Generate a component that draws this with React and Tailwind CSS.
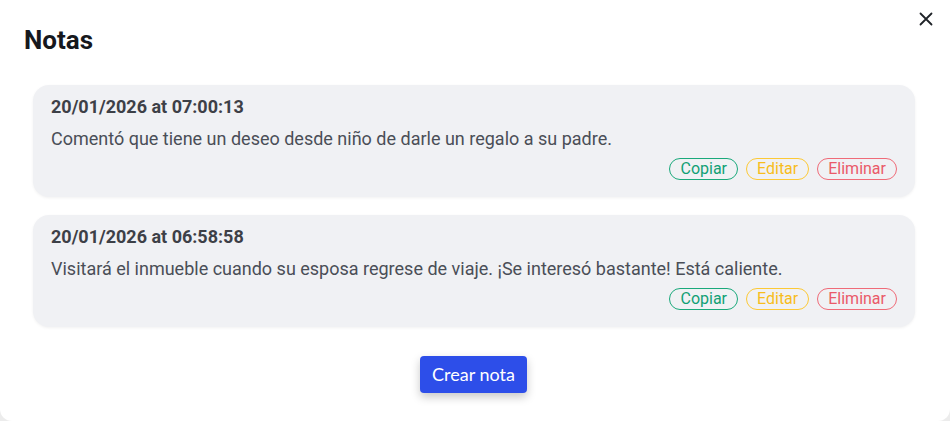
import React from "react";

const notes = [
  {
    date: "20/01/2026 at 07:00:13",
    text: "Comentó que tiene un deseo desde niño de darle un regalo a su padre.",
  },
  {
    date: "20/01/2026 at 06:58:58",
    text: "Visitará el inmueble cuando su esposa regrese de viaje. ¡Se interesó bastante! Está caliente.",
  },
];

function Pill({ label, cls }) {
  return (
    <button
      className={`h-[22px] px-[10px] rounded-full border text-[16px] leading-none flex items-center bg-transparent ${cls}`}
    >
      {label}
    </button>
  );
}

export default function App() {
  return (
    <div className="w-[950px] h-[421px] bg-[#ececec] overflow-hidden" style={{ fontFamily: "Roboto, 'Liberation Sans', sans-serif" }}>
      <div className="relative w-full h-[421px] bg-white rounded-b-[12px] flex flex-col">
        <button className="absolute top-[12px] right-[17px] w-[14px] h-[14px] text-[#1f2328]">
          <svg viewBox="0 0 14 14" width="14" height="14" fill="none" stroke="currentColor" strokeWidth="1.8" strokeLinecap="round">
            <path d="M1.5 1.5L12.5 12.5M12.5 1.5L1.5 12.5" />
          </svg>
        </button>
        <h2 className="pl-[24px] pt-[24px] text-[26px] leading-[32px] font-bold text-[#16181d]">Notas</h2>
        <div className="mt-[29px] ml-[33px] mr-[35px] flex flex-col gap-[18px]">
          {notes.map((n, i) => (
            <div key={i} className="bg-[#f0f1f4] rounded-[16px] pl-[18px] pr-[18px] pt-[10px] pb-[17px] shadow-[0_1px_3px_rgba(0,0,0,0.06)]">
              <div className="text-[18px] leading-[24px] font-bold text-[#3d4047]">{n.date}</div>
              <div className="mt-[8px] text-[18px] leading-[24px] text-[#4a4e57]">{n.text}</div>
              <div className="mt-[7px] flex justify-end gap-[8px]">
                <Pill label="Copiar" cls="border-[#1aa97b] text-[#11a075]" />
                <Pill label="Editar" cls="border-[#fcc936] text-[#f8bd1c]" />
                <Pill label="Eliminar" cls="border-[#ef6b78] text-[#ea5a69]" />
              </div>
            </div>
          ))}
        </div>
        <div className="mt-[29px] flex justify-center">
          <button
            className="mr-[3px] w-[107px] h-[37px] rounded-[4px] bg-[#2d4ee9] text-white text-[18px] shadow-[0_4px_10px_rgba(0,0,0,0.22)]"
            style={{ fontFamily: "Lato, 'Liberation Sans', sans-serif" }}
          >
            Crear nota
          </button>
        </div>
      </div>
    </div>
  );
}
